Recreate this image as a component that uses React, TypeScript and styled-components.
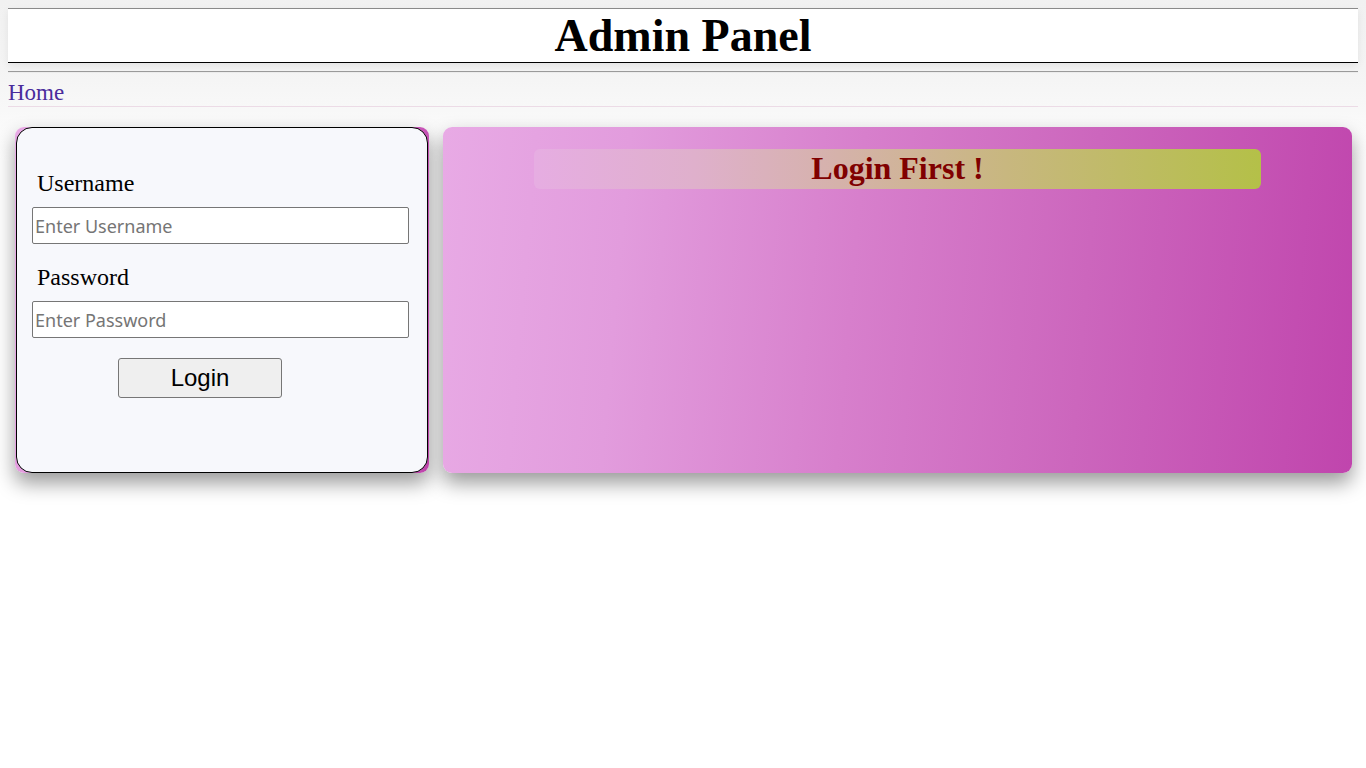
import React from "react";
import styled, { createGlobalStyle } from "styled-components";

const GlobalStyle = createGlobalStyle`
  body {
    margin: 0;
    background: #fff;
    font-family: "Liberation Serif", "Times New Roman", serif;
  }
`;

const Page = styled.div`
  min-height: 100vh;
  box-sizing: border-box;
  padding: 8px;
  background: linear-gradient(to bottom, #f1f1f1 0px, #f4f4f4 70px, #f8f8f8 110px, #ffffff 160px) no-repeat #fff;
`;

const Header = styled.header`
  background: #fff;
  border-top: 1px solid #8a8a8a;
  border-bottom: 1px solid #000;
  box-shadow: 0 3px 8px rgba(0, 0, 0, 0.07);
  text-align: center;
`;

const Title = styled.h1`
  margin: 0;
  font-family: "Liberation Serif", "Times New Roman", serif;
  font-weight: bold;
  font-size: 46px;
  line-height: 53px;
  color: #000;
`;

const Rule = styled.hr`
  margin: 8px 0 0;
  border: 0;
  border-top: 1px solid #9a9a9a;
  border-bottom: 1px solid #ececec;
`;

const Nav = styled.nav`
  display: flex;
  align-items: center;
  height: 33px;
  border-bottom: 1px solid #ecdbe6;
`;

const NavLink = styled.a`
  font-family: "Liberation Serif", "Times New Roman", serif;
  font-size: 23px;
  color: #4a2c9c;
  text-decoration: none;
  padding-top: 6px;
`;

const Main = styled.main`
  display: flex;
  gap: 14px;
  padding: 20px 6px 0 7px;
`;

const FormFrame = styled.div`
  width: 414px;
  height: 346px;
  flex: none;
  border-radius: 9px;
  background: linear-gradient(100deg, #e8aae5 0%, #d97ccf 50%, #c045ad 100%);
  box-shadow: 0 10px 20px rgba(0, 0, 0, 0.4);
  display: flex;
  padding: 0 1px;
  box-sizing: border-box;
`;

const Form = styled.form`
  flex: 1;
  background: #f7f8fc;
  border: 1px solid #000;
  border-radius: 16px;
  padding: 42px 18px 0 15px;
  display: flex;
  flex-direction: column;
`;

const Field = styled.div`
  display: flex;
  flex-direction: column;
  margin-bottom: 20px;
`;

const Label = styled.label`
  font-family: "Liberation Serif", "Times New Roman", serif;
  font-size: 24px;
  line-height: 27px;
  color: #000;
  margin: 0 0 10px 5px;
`;

const Input = styled.input`
  width: 377px;
  height: 37px;
  box-sizing: border-box;
  border: 1px solid #767676;
  border-radius: 2px;
  padding: 0 2px;
  background: #fff;
  font-family: "Noto Sans", "Open Sans", sans-serif;
  font-size: 18px;
  color: #000;
  &::placeholder { color: #757575; }
`;

const Button = styled.button`
  width: 164px;
  height: 40px;
  margin-left: 86px;
  background: #efefef;
  border: 1px solid #767676;
  border-radius: 3px;
  font-family: "Liberation Sans", Arial, sans-serif;
  font-size: 24px;
  color: #000;
  padding: 0;
`;

const Panel = styled.section`
  flex: 1;
  height: 346px;
  border-radius: 9px;
  background: linear-gradient(95deg, #e8aae5 0%, #e29cdd 20%, #d77fcc 45%, #cc66bd 70%, #c045ad 100%);
  box-shadow: 0 10px 20px rgba(0, 0, 0, 0.4);
  padding-top: 22px;
  box-sizing: border-box;
`;

const Banner = styled.h2`
  width: 80%;
  height: 40px;
  margin: 0 auto;
  border-radius: 6px;
  background: linear-gradient(90deg, #e6ade2 0%, #dfb0cc 22%, #d5b2aa 42%, #c8b77f 65%, #b4c048 100%);
  color: #800000;
  font-family: "Liberation Serif", "Times New Roman", serif;
  font-weight: bold;
  font-size: 32px;
  line-height: 38px;
  text-align: center;
`;

export default function App() {
  return (
    <Page>
      <GlobalStyle />
      <Header>
        <Title>Admin Panel</Title>
      </Header>
      <Rule />
      <Nav>
        <NavLink href="#">Home</NavLink>
      </Nav>
      <Main>
        <FormFrame>
          <Form onSubmit={(e) => e.preventDefault()}>
            <Field>
              <Label>Username</Label>
              <Input type="text" placeholder="Enter Username" />
            </Field>
            <Field>
              <Label>Password</Label>
              <Input type="password" placeholder="Enter Password" />
            </Field>
            <Button type="submit">Login</Button>
          </Form>
        </FormFrame>
        <Panel>
          <Banner>Login First !</Banner>
        </Panel>
      </Main>
    </Page>
  );
}
